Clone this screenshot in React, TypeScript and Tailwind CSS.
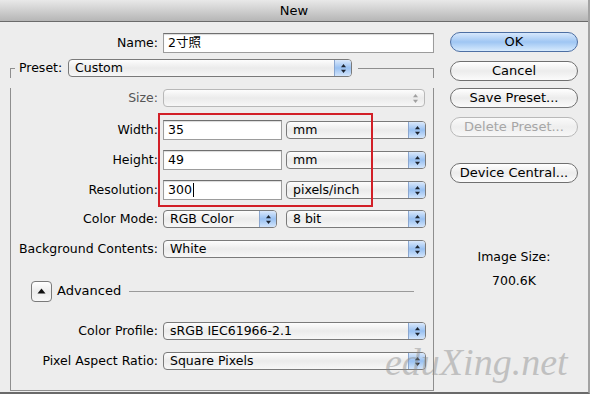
import React from "react";

function Arrows({ disabled }: { disabled?: boolean }) {
  const c = disabled ? "#a0a0a0" : "#1c2430";
  return (
    <svg width="7" height="11" viewBox="0 0 7 11">
      <path d="M3.5 1 L6 4.2 L1 4.2 Z" fill={c} />
      <path d="M1 6.8 L6 6.8 L3.5 10 Z" fill={c} />
    </svg>
  );
}

function Select({ text, className, disabled }: { text: string; className: string; disabled?: boolean }) {
  return (
    <div
      className={`flex h-[18px] items-stretch overflow-hidden rounded-[4px] border bg-linear-to-b from-[#fdfdfd] via-[#ebebeb] to-[#f7f7f7] ${
        disabled ? "border-[#b8b8b8]" : "border-[#7a7a7a]"
      } ${className}`}
    >
      <div className="flex-1 truncate pl-[6px] leading-[16px] whitespace-nowrap">{text}</div>
      {disabled ? (
        <div className="flex w-[17px] items-center justify-center">
          <Arrows disabled />
        </div>
      ) : (
        <div className="flex w-[17px] items-center justify-center border-l border-[#8aa6cf] bg-linear-to-b from-[#dbe9fb] via-[#98c0f1] to-[#d3e5fb]">
          <Arrows />
        </div>
      )}
    </div>
  );
}

function Input({ text, className, cursor }: { text: string; className: string; cursor?: boolean }) {
  return (
    <div
      className={`flex h-[20px] items-center border border-[#9c9c9c] border-t-[#6f6f6f] bg-white pl-[4px] shadow-[inset_0_1px_1px_rgba(0,0,0,0.15)] ${className}`}
    >
      <span className="leading-[18px]">{text}</span>
      {cursor && <span className="ml-[1px] h-[14px] w-px bg-black" />}
    </div>
  );
}

function Button({ label, kind, className }: { label: string; kind?: "default" | "disabled"; className?: string }) {
  let cls =
    "border-[#707070] bg-linear-to-b from-[#ffffff] via-[#ececec] to-[#fbfbfb] text-black";
  if (kind === "default")
    cls = "border-[#4d6fa3] bg-linear-to-b from-[#d7e8fc] via-[#9fc6f3] to-[#d6eafd] text-black";
  if (kind === "disabled")
    cls = "border-[#b9b9b9] bg-linear-to-b from-[#fafafa] via-[#eeeeee] to-[#f7f7f7] text-[#a6a6a6]";
  return (
    <div
      className={`flex h-[20px] w-[128px] items-center justify-center rounded-full border text-[13px] leading-[18px] ${cls} ${className ?? ""}`}
    >
      {label}
    </div>
  );
}

function Row({ label, children, className }: { label: string; children: React.ReactNode; className: string }) {
  return (
    <div className={`flex items-center ${className}`}>
      <div className="w-[147px] text-right whitespace-nowrap">{label}</div>
      <div className="ml-[5px] flex items-center gap-[9px]">{children}</div>
    </div>
  );
}

export default function App() {
  return (
    <div className="relative h-[394px] w-[590px] overflow-hidden border-r-2 border-b-2 border-r-[#a3a3a3] border-b-[#6a6a6a] bg-[#ededed] font-['DejaVu_Sans','Noto_Sans_CJK_SC',sans-serif] text-[12.5px] text-black">
      {/* title bar */}
      <div className="flex h-[22px] items-center justify-center border-b border-[#6b6b6b] bg-linear-to-b from-[#e9e9e9] to-[#b6b6b6] text-[13px]">
        New
      </div>

      <div className="flex">
        {/* left column */}
        <div className="w-[434px]">
          <div className="mt-[11px] flex h-[20px] items-center">
            <div className="w-[158px] text-right">Name:</div>
            <Input text="2寸照" className="ml-[5px] w-[271px]" />
          </div>

          {/* preset header */}
          <div className="mt-[5px] flex h-[20px] items-center">
            <div className="ml-[10px] h-[10px] w-[5px] self-end border-t border-l border-[#8e8e8e]" />
            <div className="ml-[4px] w-[45px] whitespace-nowrap">Preset:</div>
            <Select text="Custom" className="ml-[4px] w-[284px]" />
            <div className="ml-[6px] h-[10px] flex-1 self-end border-t border-r border-[#8e8e8e]" />
          </div>

          {/* group box */}
          <div className="ml-[10px] h-[303px] w-[424px] border-r border-b border-l border-[#8e8e8e]">
            <Row label="Size:" className="mt-[10px] h-[20px] text-[#555]">
              <Select text="" disabled className="w-[262px]" />
            </Row>
            <Row label="Width:" className="mt-[12px] h-[20px]">
              <Input text="35" className="w-[119px]" />
              <Select text="mm" className="-ml-[5px] w-[140px]" />
            </Row>
            <Row label="Height:" className="mt-[10px] h-[20px]">
              <Input text="49" className="w-[119px]" />
              <Select text="mm" className="-ml-[5px] w-[140px]" />
            </Row>
            <Row label="Resolution:" className="mt-[10px] h-[20px]">
              <Input text="300" cursor className="w-[119px]" />
              <Select text="pixels/inch" className="-ml-[5px] w-[140px]" />
            </Row>
            <Row label="Color Mode:" className="mt-[9px] h-[20px]">
              <Select text="RGB Color" className="w-[114px]" />
              <Select text="8 bit" className="w-[140px]" />
            </Row>
            <Row label="Background Contents:" className="mt-[10px] h-[20px]">
              <Select text="White" className="w-[263px]" />
            </Row>

            <div className="mt-[22px] flex h-[20px] items-center">
              <div className="ml-[20px] flex h-[21px] w-[21px] items-center justify-center rounded-[4px] border border-[#7a7a7a] bg-linear-to-b from-[#ffffff] via-[#ececec] to-[#f8f8f8]">
                <svg width="9" height="6" viewBox="0 0 9 6">
                  <path d="M4.5 0.5 L8.5 5.5 L0.5 5.5 Z" fill="#111" />
                </svg>
              </div>
              <div className="ml-[5px] text-[13px]">Advanced</div>
              <div className="mr-[19px] ml-[8px] h-px flex-1 bg-[#9a9a9a]" />
            </div>

            <Row label="Color Profile:" className="mt-[20px] h-[20px]">
              <Select text="sRGB IEC61966-2.1" className="w-[263px]" />
            </Row>
            <Row label="Pixel Aspect Ratio:" className="mt-[10px] h-[20px]">
              <Select text="Square Pixels" className="w-[263px]" />
            </Row>
          </div>
        </div>

        {/* right column */}
        <div className="ml-[16px] flex w-[128px] flex-col items-center">
          <Button label="OK" kind="default" className="mt-[10px]" />
          <Button label="Cancel" className="mt-[9px]" />
          <Button label="Save Preset..." className="mt-[7px]" />
          <Button label="Delete Preset..." kind="disabled" className="mt-[9px]" />
          <Button label="Device Central..." className="mt-[26px]" />
          <div className="mt-[66px] text-[12.5px] leading-[16px]">Image Size:</div>
          <div className="mt-[8px] text-[12.5px] leading-[16px]">700.6K</div>
        </div>
      </div>

      {/* red annotation box */}
      <div className="pointer-events-none absolute top-[113px] left-[158px] h-[94px] w-[215px] border-2 border-[#d21f27]" />

      {/* watermark */}
      <div className="pointer-events-none absolute top-[343px] left-[385px] font-['Liberation_Serif',serif] text-[38px] leading-none text-[#8a8a8a] italic opacity-45">
        eduXing.net
      </div>
    </div>
  );
}
